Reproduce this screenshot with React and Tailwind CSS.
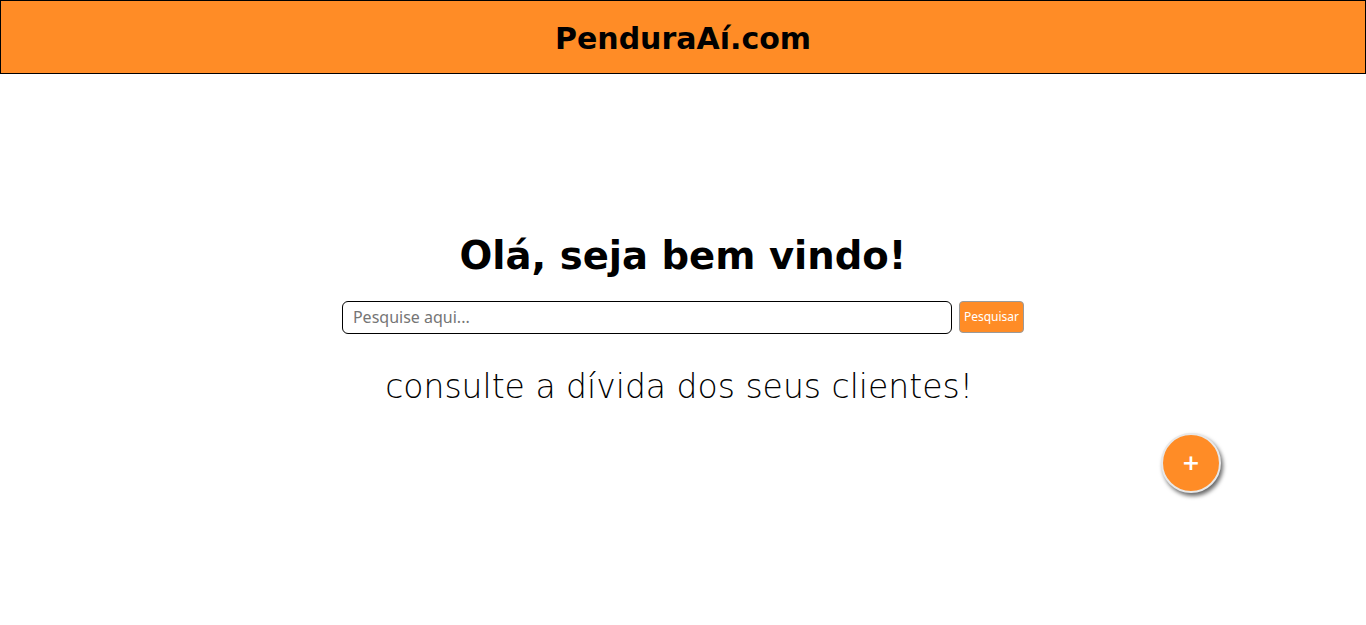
export default function App() {
  return (
    <div className="min-h-screen bg-white" style={{ fontFamily: '"DejaVu Sans", sans-serif' }}>
      <header className="h-[74px] bg-[#ff8c26] border border-black flex items-center justify-center pt-[3px]">
        <h1 className="text-[30px] font-bold text-black leading-none">PenduraAí.com</h1>
      </header>

      <main className="flex flex-col items-center pt-[163px]">
        <h2 className="text-[38.6px] font-bold text-black leading-none">Olá, seja bem vindo!</h2>

        <form className="mt-[25px] flex items-center gap-[7px]" onSubmit={(e) => e.preventDefault()}>
          <input
            type="text"
            placeholder="Pesquise aqui..."
            className="w-[610px] h-[33px] px-[10px] border border-black rounded-[6px] text-[16px] outline-none placeholder:text-[#757575]"
            style={{ fontFamily: '"Noto Sans", sans-serif' }}
          />
          <button
            type="submit"
            className="h-[32px] px-[4px] bg-[#ff8c26] border border-[#9a9a9a] rounded-[4px] text-white text-[12px]"
            style={{ fontFamily: '"Noto Sans", sans-serif' }}
          >
            Pesquisar
          </button>
        </form>

        <p className="mt-[36px] mr-[8px] text-[33px] font-extralight text-black leading-none">consulte a dívida dos seus clientes!</p>

        <div className="w-full flex justify-end pr-[145px] mt-[30px]">
          <button className="w-[60px] h-[60px] rounded-full bg-[#ff8c26] border-2 border-[#e8e8e8] shadow-[2px_3px_4px_rgba(0,0,0,0.6)] text-white text-[22px] font-black flex items-center justify-center">
            +
          </button>
        </div>
      </main>
    </div>
  );
}
